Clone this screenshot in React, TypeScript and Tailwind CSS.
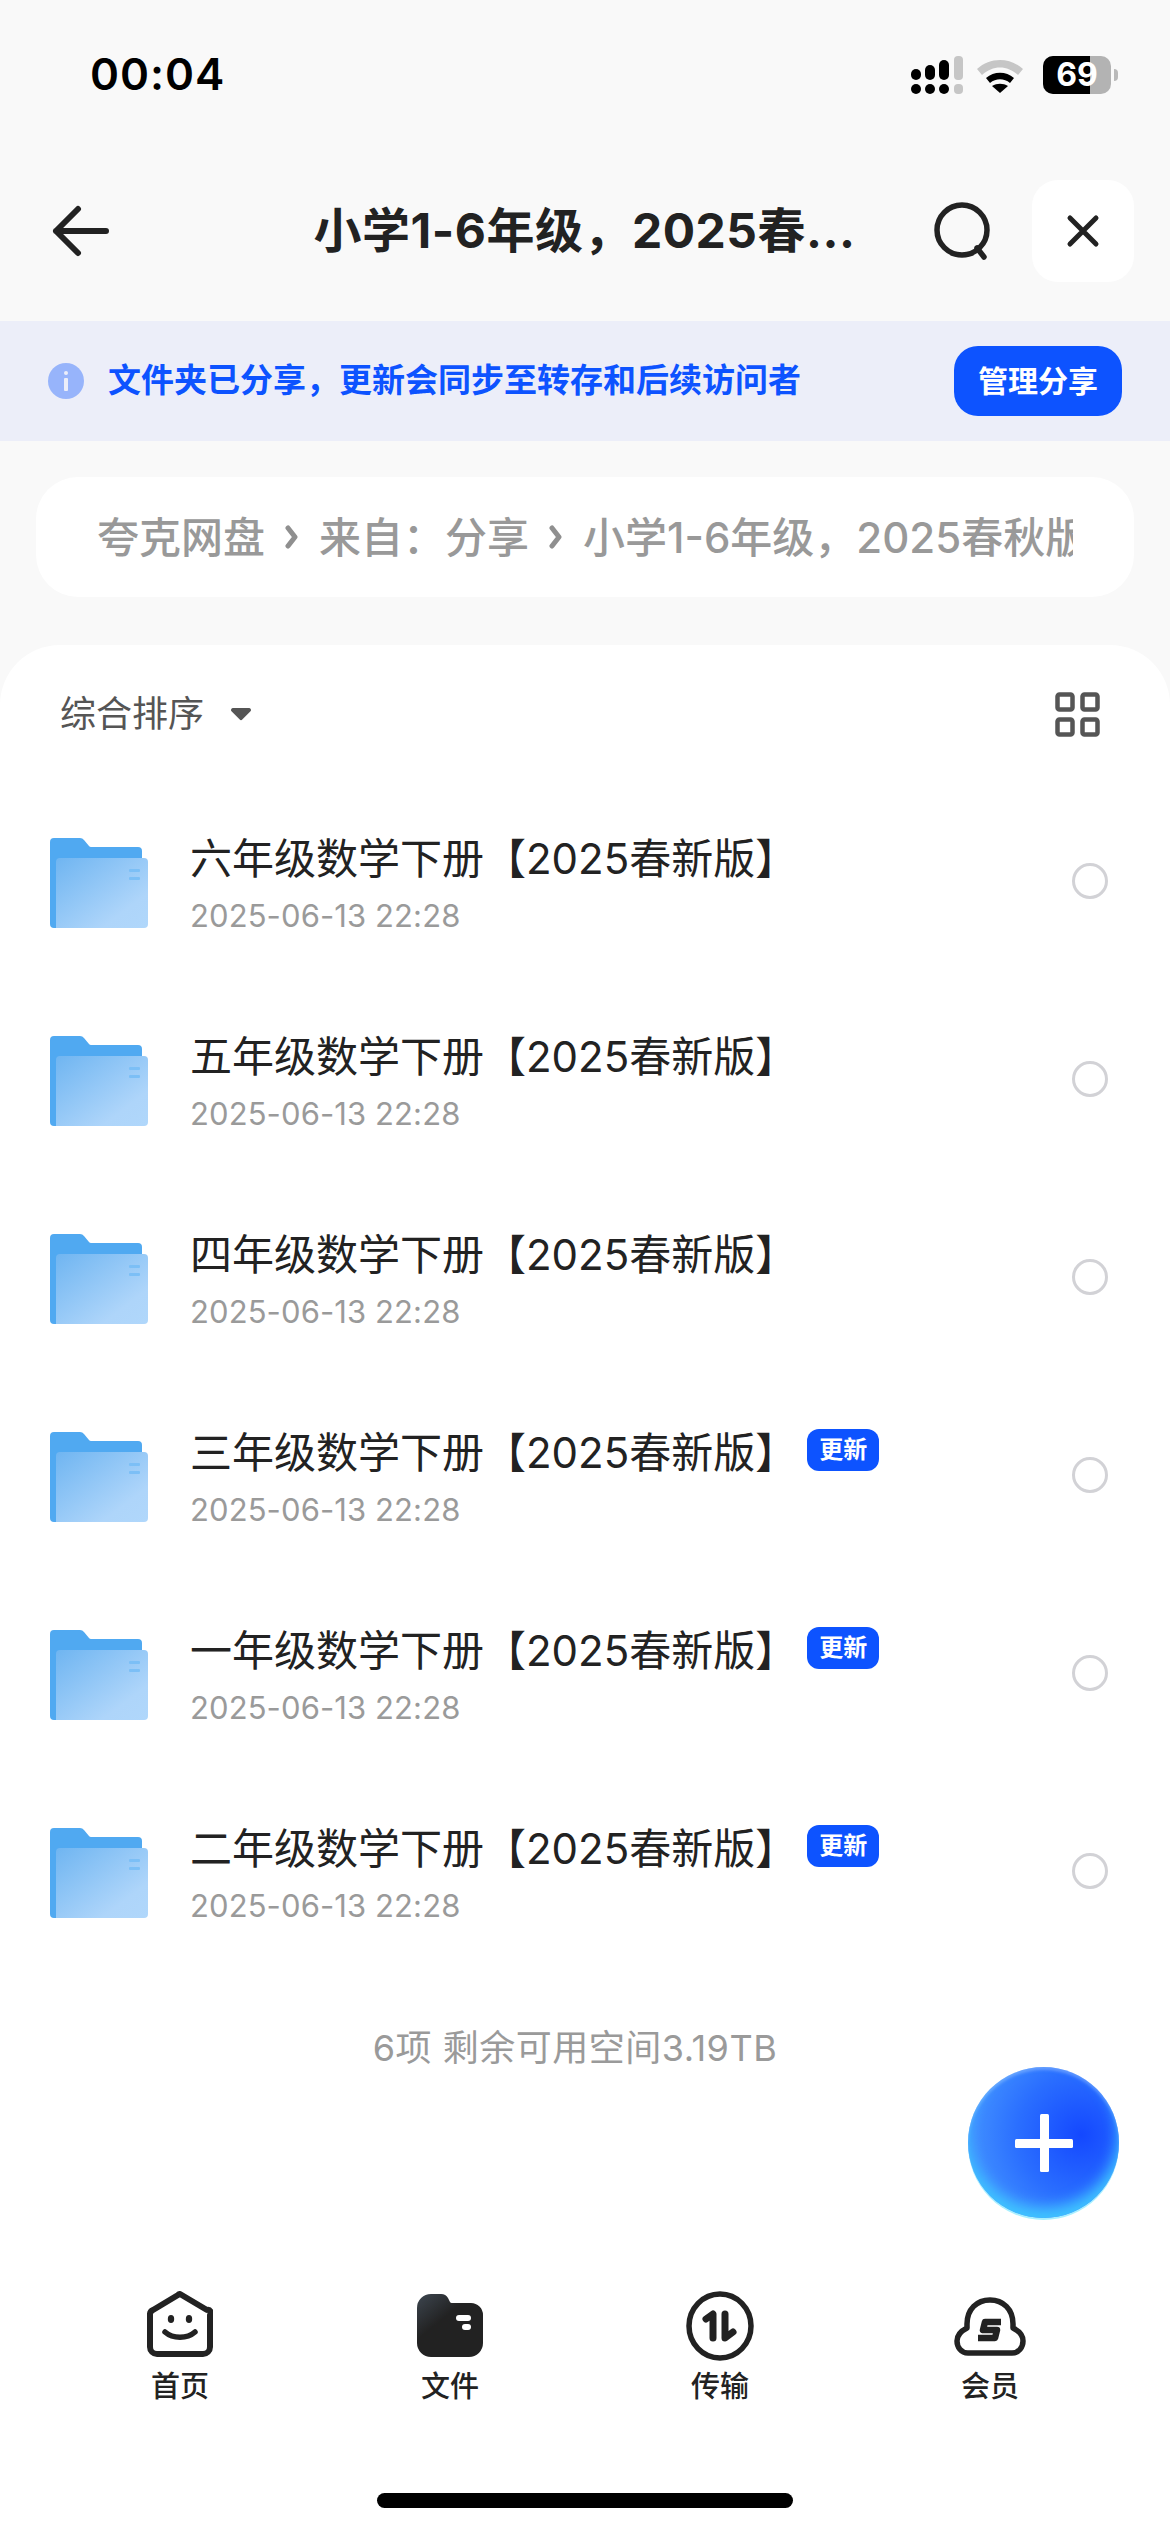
import React from 'react';

const FOLDERS = [
  { name: '六年级数学下册【2025春新版】', isNew: false },
  { name: '五年级数学下册【2025春新版】', isNew: false },
  { name: '四年级数学下册【2025春新版】', isNew: false },
  { name: '三年级数学下册【2025春新版】', isNew: true },
  { name: '一年级数学下册【2025春新版】', isNew: true },
  { name: '二年级数学下册【2025春新版】', isNew: true },
];

const FolderIcon = ({ id }: { id: number }) => (
  <svg width="98" height="90" viewBox="0 0 98 90" className="shrink-0">
    <defs>
      <linearGradient id={`front${id}`} x1="0" y1="0" x2="1" y2="1">
        <stop offset="0" stopColor="#6fb5f1" />
        <stop offset="0.75" stopColor="#aed5fa" />
        <stop offset="1" stopColor="#b0d7fb" />
      </linearGradient>
    </defs>
    <path d="M4 0H30a5 5 0 0 1 4 2l5 6a3 3 0 0 0 2 1H88a4 4 0 0 1 4 4V90H4a4 4 0 0 1-4-4V4a4 4 0 0 1 4-4Z" fill="#50a9f1" />
    <path d="M10 20H94a4 4 0 0 1 4 4V86a4 4 0 0 1-4 4H6V24a4 4 0 0 1 4-4Z" fill={`url(#front${id})`} />
    <rect x="79" y="31" width="11" height="3" rx="1" fill="#7cbff6" />
    <rect x="79" y="39" width="11" height="3" rx="1" fill="#7cbff6" />
  </svg>
);

const Chevron = () => (
  <svg width="14" height="24" viewBox="0 0 14 24" className="shrink-0 mx-[20px]">
    <path d="M3 3l7 9-7 9" fill="none" stroke="#8f8f8f" strokeWidth="5" strokeLinecap="round" strokeLinejoin="round" />
  </svg>
);

const StatusIcons = () => (
  <div className="flex items-center">
    <svg width="60" height="40" viewBox="0 0 60 40">
      <rect x="0" y="14" width="10" height="11" rx="5" fill="#000" />
      <rect x="14" y="10" width="10" height="15" rx="5" fill="#000" />
      <rect x="28" y="5" width="10" height="20" rx="5" fill="#000" />
      <rect x="43" y="1" width="9" height="24" rx="4" fill="#c6c6c6" />
      <rect x="0" y="29" width="10" height="10" rx="5" fill="#000" />
      <rect x="14" y="29" width="10" height="10" rx="5" fill="#000" />
      <rect x="28" y="29" width="10" height="10" rx="5" fill="#000" />
      <rect x="43" y="29" width="9" height="10" rx="4" fill="#c6c6c6" />
    </svg>
    <svg width="50" height="38" viewBox="0 0 50 38" className="ml-[4px]">
      <path d="M2 13C15 1 35 1 48 13l-5 6C32 9 18 9 7 19Z" fill="#c6c6c6" />
      <path d="M11 22c8-7 20-7 28 0l-4 5c-6-5-14-5-20 0Z" fill="#000" />
      <path d="M25 37l-8-7c5-3 11-3 16 0Z" fill="#000" />
    </svg>
    <div className="relative ml-[18px] w-[68px] h-[38px] rounded-[10px] bg-[#b3b3b3] overflow-hidden">
      <div className="h-full w-[47px] bg-black" />
      <span className="absolute inset-0 flex items-center justify-center text-white text-[32px] font-bold leading-none">69</span>
    </div>
    <div className="ml-[3px] w-[4px] h-[12px] rounded-r-full bg-[#b9b9b9]" />
  </div>
);

const HomeIcon = () => (
  <svg width="66" height="66" viewBox="0 0 66 66">
    <path d="M33 3 60 19a3 3 0 0 1 3 5V56a7 7 0 0 1-7 7H10a7 7 0 0 1-7-7V24a5 5 0 0 1 3-5L31 4a4 4 0 0 1 2-1Z" fill="none" stroke="#222" strokeWidth="6" strokeLinejoin="round" />
    <ellipse cx="24" cy="28" rx="3.2" ry="4" fill="#222" />
    <ellipse cx="42" cy="28" rx="3.2" ry="4" fill="#222" />
    <path d="M18 41c8 7 22 7 30 0" fill="none" stroke="#222" strokeWidth="5.5" strokeLinecap="round" />
  </svg>
);

const FilesIcon = () => (
  <svg width="66" height="63" viewBox="0 0 66 63" className="mt-[3px]">
    <defs>
      <linearGradient id="filesDark" x1="0" y1="0" x2="0.6" y2="0.7">
        <stop offset="0" stopColor="#3d4650" />
        <stop offset="0.6" stopColor="#222" />
      </linearGradient>
    </defs>
    <path d="M14 0H24a8 8 0 0 1 7 4l2 4a2 2 0 0 0 2 1H54a12 12 0 0 1 12 12V49a14 14 0 0 1-14 14H14A14 14 0 0 1 0 49V14A14 14 0 0 1 14 0Z" fill="url(#filesDark)" />
    <rect x="39" y="21" width="15" height="6" rx="3" fill="#fff" />
    <rect x="45" y="30" width="9" height="6" rx="3" fill="#fff" />
  </svg>
);

const TransferIcon = () => (
  <svg width="68" height="70" viewBox="0 0 68 70">
    <ellipse cx="34" cy="35" rx="31" ry="32" fill="none" stroke="#222" strokeWidth="5.5" />
    <path d="M20 28 27 23V47" fill="none" stroke="#222" strokeWidth="7" strokeLinecap="round" strokeLinejoin="round" />
    <path d="M39 23V47L47 41" fill="none" stroke="#222" strokeWidth="7" strokeLinecap="round" strokeLinejoin="round" />
  </svg>
);

const MemberIcon = () => (
  <svg width="72" height="60" viewBox="0 0 72 60" className="mt-[6px]">
    <path d="M14 56C7 56 3 50 3 44c0-6 4-10 10-13 0-2 0-3 0-4C13 12 23 3 36 3s23 9 23 24c0 1 0 2 0 4 6 3 10 7 10 13 0 6-4 12-11 12Z" fill="none" stroke="#222" strokeWidth="5.5" strokeLinejoin="round" />
    <path d="M47 25H31L29 33H43L41 41H24" fill="none" stroke="#222" strokeWidth="6.5" strokeLinejoin="round" />
  </svg>
);

const NAV = [
  { label: '首页', icon: <HomeIcon /> },
  { label: '文件', icon: <FilesIcon /> },
  { label: '传输', icon: <TransferIcon /> },
  { label: '会员', icon: <MemberIcon /> },
];

export default function App() {
  return (
    <div className="relative w-[1170px] h-[2532px] overflow-hidden flex flex-col bg-[#f9f9f9] text-[#222] font-['Inter','Noto_Sans_CJK_SC',sans-serif]">
      {/* status bar */}
      <div className="h-[148px] shrink-0 flex justify-between items-start pt-[48px] pl-[90px] pr-[52px]">
        <span className="text-[44px] leading-[52px] font-semibold text-black tracking-[1px]">00:04</span>
        <div className="mt-[7px]">
          <StatusIcons />
        </div>
      </div>

      {/* title bar */}
      <div className="h-[173px] shrink-0 flex items-start pt-[32px] pl-[52px] pr-[36px]">
        <div className="h-[102px] flex items-center">
          <svg width="58" height="52" viewBox="0 0 58 52">
            <path d="M26 4 4 26l22 22M4 26h50" fill="none" stroke="#222" strokeWidth="6" strokeLinecap="round" strokeLinejoin="round" />
          </svg>
        </div>
        <div className="w-[824px] h-[102px] flex items-center justify-center pl-[126px]">
          <span className="text-[48px] font-bold whitespace-nowrap tracking-[0.5px]">小学1-6年级，2025春...</span>
        </div>
        <div className="h-[102px] flex items-center">
          <svg width="60" height="60" viewBox="0 0 60 60">
            <circle cx="29" cy="29" r="25" fill="none" stroke="#222" strokeWidth="5.5" />
            <path d="M44 47l7 9" fill="none" stroke="#222" strokeWidth="5.5" strokeLinecap="round" />
          </svg>
        </div>
        <div className="ml-[39px] w-[102px] h-[102px] rounded-[26px] bg-white flex items-center justify-center">
          <svg width="34" height="34" viewBox="0 0 34 34">
            <path d="M4 4l26 26M30 4 4 30" fill="none" stroke="#222" strokeWidth="5" strokeLinecap="round" />
          </svg>
        </div>
      </div>

      {/* share notice */}
      <div className="h-[120px] shrink-0 bg-[#eceef9] flex items-center pl-[48px] pr-[48px]">
        <svg width="36" height="36" viewBox="0 0 36 36" className="shrink-0">
          <circle cx="18" cy="18" r="18" fill="#97b4fb" />
          <rect x="16" y="8" width="4" height="4" rx="2" fill="#eceef9" />
          <rect x="16" y="15" width="4" height="13" rx="1" fill="#eceef9" />
        </svg>
        <span className="ml-[24px] flex-1 text-[33px] font-semibold text-[#0d53ff] whitespace-nowrap">文件夹已分享，更新会同步至转存和后续访问者</span>
        <button className="w-[168px] h-[70px] rounded-[24px] bg-[#0d53ff] text-white text-[30px] font-bold">管理分享</button>
      </div>

      {/* breadcrumb */}
      <div className="shrink-0 px-[36px] pt-[36px]">
        <div className="h-[120px] rounded-[42px] bg-white px-[61px] flex items-center">
          <div className="w-full flex items-center overflow-hidden whitespace-nowrap text-[42px] font-medium text-[#999]">
            <span>夸克网盘</span>
            <Chevron />
            <span>来自：分享</span>
            <Chevron />
            <span>小学1-6年级，2025春秋版</span>
          </div>
        </div>
      </div>

      {/* file sheet */}
      <div className="mt-[48px] flex-1 bg-white rounded-t-[60px] flex flex-col">
        <div className="h-[96px] shrink-0 flex items-center justify-between pl-[60px] pr-[70px] pt-[21px] box-content">
          <div className="flex items-center">
            <span className="text-[36px] text-[#555]">综合排序</span>
            <svg width="22" height="14" viewBox="0 0 22 14" className="ml-[26px]">
              <path d="M3 1h16a2 2 0 0 1 1.500 3.300l-8 8a2 2 0 0 1-3 0l-8-8A2 2 0 0 1 3 1Z" fill="#555" />
            </svg>
          </div>
          <svg width="45" height="45" viewBox="0 0 45 45">
            <g fill="none" stroke="#555" strokeWidth="4.500">
              <rect x="2.500" y="2.500" width="15" height="15" rx="2" />
              <rect x="27.500" y="2.500" width="15" height="15" rx="2" />
              <rect x="2.500" y="27.500" width="15" height="15" rx="2" />
              <rect x="27.500" y="27.500" width="15" height="15" rx="2" />
            </g>
          </svg>
        </div>

        <div className="pt-[76px] flex flex-col">
          {FOLDERS.map((folder, i) => (
            <div key={folder.name} className="h-[198px] flex items-start pl-[50px] pr-[62px]">
              <FolderIcon id={i} />
              <div className="ml-[42px] flex-1 -mt-[8px]">
                <div className="flex items-center h-[56px]">
                  <span className="text-[42px] text-[#222] whitespace-nowrap">{folder.name}</span>
                  {folder.isNew && (
                    <span className="ml-[10px] w-[72px] h-[42px] -mt-[4px] rounded-[12px] bg-[#0d53ff] text-white text-[24px] font-bold flex items-center justify-center">更新</span>
                  )}
                </div>
                <div className="mt-[10px] text-[31px] leading-[40px] tracking-[0.1px] text-[#9a9a9a]">2025-06-13 22:28</div>
              </div>
              <div className="mt-[25px] w-[36px] h-[36px] rounded-full border-[3px] border-[#d2d2d6] shrink-0" />
            </div>
          ))}
        </div>

        <div className="text-center text-[36px] leading-[44px] tracking-[0.5px] text-[#9a9a9a] pr-[20px]">6项 剩余可用空间3.19TB</div>

        {/* bottom nav */}
        <div className="mt-auto">
          <div className="grid grid-cols-4 px-[45px]">
            {NAV.map((item) => (
              <div key={item.label} className="flex flex-col items-center">
                <div className="h-[70px] flex items-start justify-center">{item.icon}</div>
                <span className="mt-[8px] text-[29px] leading-[36px] font-medium text-[#222]">{item.label}</span>
              </div>
            ))}
          </div>
          <div className="h-[127px] flex justify-center pt-[88px] box-border">
            <div className="w-[416px] h-[15px] rounded-full bg-black" />
          </div>
        </div>
      </div>

      {/* add button */}
      <button className="absolute left-[968px] top-[2067px] w-[151px] h-[151px] rounded-full flex items-center justify-center bg-[radial-gradient(circle_at_75%_45%,#1448ff_0%,#2a6eff_45%,#3f8cff_75%)] shadow-[inset_0_-10px_14px_#3fc4ff,inset_0_3px_3px_rgba(255,255,255,0.25),0_2px_0_#a9f0ff]">
        <svg width="58" height="58" viewBox="0 0 58 58">
          <rect x="25" y="0" width="9" height="58" rx="1.500" fill="#fff" />
          <rect x="0" y="25" width="58" height="9" rx="1.500" fill="#fff" />
        </svg>
      </button>
    </div>
  );
}
